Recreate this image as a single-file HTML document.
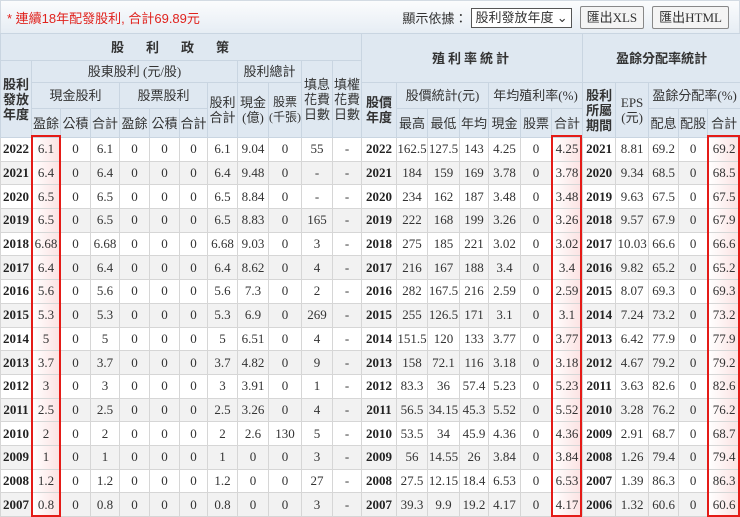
<!DOCTYPE html>
<html><head><meta charset="utf-8">
<style>
body{margin:0;width:740px;height:516px;overflow:hidden;background:#fff;font-family:"Liberation Serif","Noto Sans CJK TC",serif;color:#333;position:relative}
.bar{position:absolute;left:0;top:0;width:738px;height:32px;border:1px solid #d3dbe3;border-bottom:none;background:linear-gradient(#fbfcfd,#e6edf4);}
.bar .t{position:absolute;left:6px;top:7px;font-size:13px;color:#e0231e;font-family:"Liberation Sans","Noto Sans CJK TC",sans-serif}
.bar .r{position:absolute;right:10px;top:5px;font-size:13px;font-family:"Liberation Serif","Noto Sans CJK TC",serif;display:flex;align-items:center;gap:4px}
.sel{border:1px solid #555;background:#fff;padding:0 3px;height:18px;line-height:18px;font-size:13px}
.btn{border:1px solid #888;background:#f4f4f4;padding:0 6px;height:21px;line-height:21px;border-radius:2px;margin-left:4px;font-size:13px}
table{position:absolute;left:0;top:33px;border-collapse:collapse;table-layout:fixed;width:740px}
td,th{border:1px solid #d6d6d6;padding:0;text-align:center;font-size:13px;overflow:hidden;white-space:nowrap}
th{background:#dfe8f1;font-weight:normal;color:#333;border-color:#c9d5e1;line-height:15px}
th.b{font-weight:bold}
td.y{font-weight:bold;color:#222}
tbody tr{height:23.7px}
tbody tr:nth-child(even) td{background:#f2f2f2}
tbody td.h{background:linear-gradient(to right,#fff,#fbe1e1)!important}
.box{position:absolute;border:2px solid #e41b17;top:135px;height:378px;box-sizing:content-box}
</style></head><body>
<div class="bar"><div class="t">* 連續18年配發股利, 合計69.89元</div>
<div class="r">顯示依據：<span class="sel">股利發放年度 ⌄</span><span class="btn">匯出XLS</span><span class="btn">匯出HTML</span></div></div>
<table>
<colgroup><col style="width:31px"><col style="width:29px"><col style="width:30px"><col style="width:29px"><col style="width:30px"><col style="width:30px"><col style="width:28px"><col style="width:30px"><col style="width:31px"><col style="width:33px"><col style="width:31px"><col style="width:29px"><col style="width:35px"><col style="width:31px"><col style="width:32px"><col style="width:29px"><col style="width:32px"><col style="width:31px"><col style="width:31px"><col style="width:33px"><col style="width:33px"><col style="width:30px"><col style="width:29px"><col style="width:33px"></colgroup>
<thead>
<tr style="height:27px"><th colspan="12" class="b" style="letter-spacing:22px">股利政策</th><th colspan="7" rowspan="2" class="b" style="letter-spacing:3px">殖利率統計</th><th colspan="5" rowspan="2" class="b">盈餘分配率統計</th></tr>
<tr style="height:22px"><th rowspan="3" class="b">股利<br>發放<br>年度</th><th colspan="7">股東股利 (元/股)</th><th colspan="2">股利總計</th><th rowspan="3">填息<br>花費<br>日數</th><th rowspan="3">填權<br>花費<br>日數</th></tr>
<tr style="height:26px"><th colspan="3">現金股利</th><th colspan="3">股票股利</th><th rowspan="2">股利<br>合計</th><th rowspan="2">現金<br>(億)</th><th rowspan="2" style="font-size:12px">股票<br>(千張)</th><th rowspan="2" class="b">股價<br>年度</th><th colspan="3">股價統計(元)</th><th colspan="3">年均殖利率(%)</th><th rowspan="2" class="b">股利<br>所屬<br>期間</th><th rowspan="2">EPS<br>(元)</th><th colspan="3">盈餘分配率(%)</th></tr>
<tr style="height:29px"><th>盈餘</th><th>公積</th><th>合計</th><th>盈餘</th><th>公積</th><th>合計</th><th>最高</th><th>最低</th><th>年均</th><th>現金</th><th>股票</th><th>合計</th><th>配息</th><th>配股</th><th>合計</th></tr>
</thead>
<tbody>
<tr><td class="y">2022</td><td class="h">6.1</td><td>0</td><td>6.1</td><td>0</td><td>0</td><td>0</td><td>6.1</td><td>9.04</td><td>0</td><td>55</td><td>-</td><td class="y">2022</td><td>162.5</td><td>127.5</td><td>143</td><td>4.25</td><td>0</td><td class="h">4.25</td><td class="y">2021</td><td>8.81</td><td>69.2</td><td>0</td><td class="h">69.2</td></tr>
<tr><td class="y">2021</td><td class="h">6.4</td><td>0</td><td>6.4</td><td>0</td><td>0</td><td>0</td><td>6.4</td><td>9.48</td><td>0</td><td>-</td><td>-</td><td class="y">2021</td><td>184</td><td>159</td><td>169</td><td>3.78</td><td>0</td><td class="h">3.78</td><td class="y">2020</td><td>9.34</td><td>68.5</td><td>0</td><td class="h">68.5</td></tr>
<tr><td class="y">2020</td><td class="h">6.5</td><td>0</td><td>6.5</td><td>0</td><td>0</td><td>0</td><td>6.5</td><td>8.84</td><td>0</td><td>-</td><td>-</td><td class="y">2020</td><td>234</td><td>162</td><td>187</td><td>3.48</td><td>0</td><td class="h">3.48</td><td class="y">2019</td><td>9.63</td><td>67.5</td><td>0</td><td class="h">67.5</td></tr>
<tr><td class="y">2019</td><td class="h">6.5</td><td>0</td><td>6.5</td><td>0</td><td>0</td><td>0</td><td>6.5</td><td>8.83</td><td>0</td><td>165</td><td>-</td><td class="y">2019</td><td>222</td><td>168</td><td>199</td><td>3.26</td><td>0</td><td class="h">3.26</td><td class="y">2018</td><td>9.57</td><td>67.9</td><td>0</td><td class="h">67.9</td></tr>
<tr><td class="y">2018</td><td class="h">6.68</td><td>0</td><td>6.68</td><td>0</td><td>0</td><td>0</td><td>6.68</td><td>9.03</td><td>0</td><td>3</td><td>-</td><td class="y">2018</td><td>275</td><td>185</td><td>221</td><td>3.02</td><td>0</td><td class="h">3.02</td><td class="y">2017</td><td>10.03</td><td>66.6</td><td>0</td><td class="h">66.6</td></tr>
<tr><td class="y">2017</td><td class="h">6.4</td><td>0</td><td>6.4</td><td>0</td><td>0</td><td>0</td><td>6.4</td><td>8.62</td><td>0</td><td>4</td><td>-</td><td class="y">2017</td><td>216</td><td>167</td><td>188</td><td>3.4</td><td>0</td><td class="h">3.4</td><td class="y">2016</td><td>9.82</td><td>65.2</td><td>0</td><td class="h">65.2</td></tr>
<tr><td class="y">2016</td><td class="h">5.6</td><td>0</td><td>5.6</td><td>0</td><td>0</td><td>0</td><td>5.6</td><td>7.3</td><td>0</td><td>2</td><td>-</td><td class="y">2016</td><td>282</td><td>167.5</td><td>216</td><td>2.59</td><td>0</td><td class="h">2.59</td><td class="y">2015</td><td>8.07</td><td>69.3</td><td>0</td><td class="h">69.3</td></tr>
<tr><td class="y">2015</td><td class="h">5.3</td><td>0</td><td>5.3</td><td>0</td><td>0</td><td>0</td><td>5.3</td><td>6.9</td><td>0</td><td>269</td><td>-</td><td class="y">2015</td><td>255</td><td>126.5</td><td>171</td><td>3.1</td><td>0</td><td class="h">3.1</td><td class="y">2014</td><td>7.24</td><td>73.2</td><td>0</td><td class="h">73.2</td></tr>
<tr><td class="y">2014</td><td class="h">5</td><td>0</td><td>5</td><td>0</td><td>0</td><td>0</td><td>5</td><td>6.51</td><td>0</td><td>4</td><td>-</td><td class="y">2014</td><td>151.5</td><td>120</td><td>133</td><td>3.77</td><td>0</td><td class="h">3.77</td><td class="y">2013</td><td>6.42</td><td>77.9</td><td>0</td><td class="h">77.9</td></tr>
<tr><td class="y">2013</td><td class="h">3.7</td><td>0</td><td>3.7</td><td>0</td><td>0</td><td>0</td><td>3.7</td><td>4.82</td><td>0</td><td>9</td><td>-</td><td class="y">2013</td><td>158</td><td>72.1</td><td>116</td><td>3.18</td><td>0</td><td class="h">3.18</td><td class="y">2012</td><td>4.67</td><td>79.2</td><td>0</td><td class="h">79.2</td></tr>
<tr><td class="y">2012</td><td class="h">3</td><td>0</td><td>3</td><td>0</td><td>0</td><td>0</td><td>3</td><td>3.91</td><td>0</td><td>1</td><td>-</td><td class="y">2012</td><td>83.3</td><td>36</td><td>57.4</td><td>5.23</td><td>0</td><td class="h">5.23</td><td class="y">2011</td><td>3.63</td><td>82.6</td><td>0</td><td class="h">82.6</td></tr>
<tr><td class="y">2011</td><td class="h">2.5</td><td>0</td><td>2.5</td><td>0</td><td>0</td><td>0</td><td>2.5</td><td>3.26</td><td>0</td><td>4</td><td>-</td><td class="y">2011</td><td>56.5</td><td>34.15</td><td>45.3</td><td>5.52</td><td>0</td><td class="h">5.52</td><td class="y">2010</td><td>3.28</td><td>76.2</td><td>0</td><td class="h">76.2</td></tr>
<tr><td class="y">2010</td><td class="h">2</td><td>0</td><td>2</td><td>0</td><td>0</td><td>0</td><td>2</td><td>2.6</td><td>130</td><td>5</td><td>-</td><td class="y">2010</td><td>53.5</td><td>34</td><td>45.9</td><td>4.36</td><td>0</td><td class="h">4.36</td><td class="y">2009</td><td>2.91</td><td>68.7</td><td>0</td><td class="h">68.7</td></tr>
<tr><td class="y">2009</td><td class="h">1</td><td>0</td><td>1</td><td>0</td><td>0</td><td>0</td><td>1</td><td>0</td><td>0</td><td>3</td><td>-</td><td class="y">2009</td><td>56</td><td>14.55</td><td>26</td><td>3.84</td><td>0</td><td class="h">3.84</td><td class="y">2008</td><td>1.26</td><td>79.4</td><td>0</td><td class="h">79.4</td></tr>
<tr><td class="y">2008</td><td class="h">1.2</td><td>0</td><td>1.2</td><td>0</td><td>0</td><td>0</td><td>1.2</td><td>0</td><td>0</td><td>27</td><td>-</td><td class="y">2008</td><td>27.5</td><td>12.15</td><td>18.4</td><td>6.53</td><td>0</td><td class="h">6.53</td><td class="y">2007</td><td>1.39</td><td>86.3</td><td>0</td><td class="h">86.3</td></tr>
<tr><td class="y">2007</td><td class="h">0.8</td><td>0</td><td>0.8</td><td>0</td><td>0</td><td>0</td><td>0.8</td><td>0</td><td>0</td><td>3</td><td>-</td><td class="y">2007</td><td>39.3</td><td>9.9</td><td>19.2</td><td>4.17</td><td>0</td><td class="h">4.17</td><td class="y">2006</td><td>1.32</td><td>60.6</td><td>0</td><td class="h">60.6</td></tr>
</tbody></table>
<div class="box" style="left:31px;width:26px"></div>
<div class="box" style="left:551px;width:27px"></div>
<div class="box" style="left:707px;width:29px"></div>
</body></html>
